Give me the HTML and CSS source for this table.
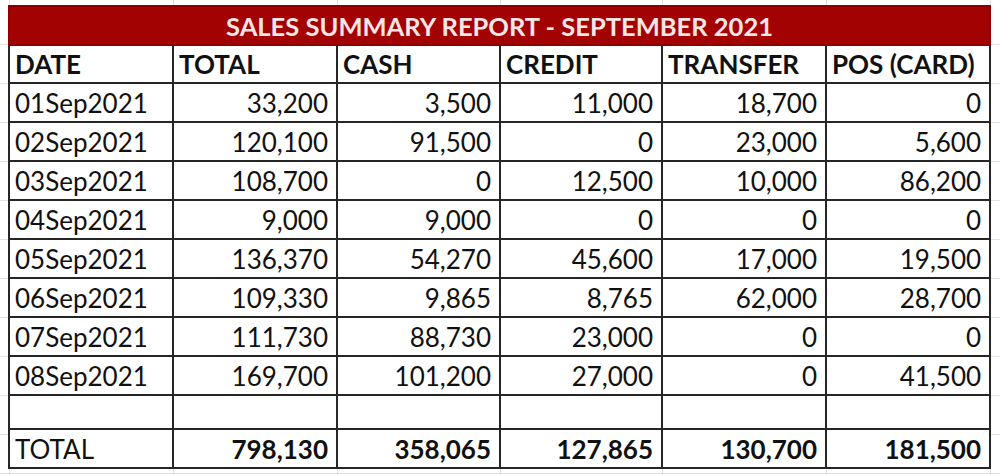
FILE: index.html
```html
<!DOCTYPE html>
<html>
<head>
<meta charset="utf-8">
<link rel="stylesheet" href="styles.css">
</head>
<body>
<div class="sheet">
<table class="report">
  <colgroup>
    <col class="c1"><col class="c2"><col class="c3"><col class="c4"><col class="c5"><col class="c6">
  </colgroup>
  <thead>
    <tr class="banner"><th colspan="6">SALES SUMMARY REPORT - SEPTEMBER 2021</th></tr>
    <tr class="head">
      <th>DATE</th><th>TOTAL</th><th>CASH</th><th>CREDIT</th><th>TRANSFER</th><th>POS (CARD)</th>
    </tr>
  </thead>
  <tbody>
    <tr><td class="d">01Sep2021</td><td>33,200</td><td>3,500</td><td>11,000</td><td>18,700</td><td>0</td></tr>
    <tr><td class="d">02Sep2021</td><td>120,100</td><td>91,500</td><td>0</td><td>23,000</td><td>5,600</td></tr>
    <tr><td class="d">03Sep2021</td><td>108,700</td><td>0</td><td>12,500</td><td>10,000</td><td>86,200</td></tr>
    <tr><td class="d">04Sep2021</td><td>9,000</td><td>9,000</td><td>0</td><td>0</td><td>0</td></tr>
    <tr><td class="d">05Sep2021</td><td>136,370</td><td>54,270</td><td>45,600</td><td>17,000</td><td>19,500</td></tr>
    <tr><td class="d">06Sep2021</td><td>109,330</td><td>9,865</td><td>8,765</td><td>62,000</td><td>28,700</td></tr>
    <tr><td class="d">07Sep2021</td><td>111,730</td><td>88,730</td><td>23,000</td><td>0</td><td>0</td></tr>
    <tr><td class="d">08Sep2021</td><td>169,700</td><td>101,200</td><td>27,000</td><td>0</td><td>41,500</td></tr>
    <tr class="blank"><td></td><td></td><td></td><td></td><td></td><td></td></tr>
    <tr class="total"><td class="d">TOTAL</td><td>798,130</td><td>358,065</td><td>127,865</td><td>130,700</td><td>181,500</td></tr>
  </tbody>
</table>
</div>
</body>
</html>
```

FILE: styles.css
```css
html, body {
  margin: 0;
  padding: 0;
}
body {
  width: 1000px;
  height: 475px;
  overflow: hidden;
  background-color: #ffffff;
  background-image:
    linear-gradient(#e2e2e2, #e2e2e2), linear-gradient(#e2e2e2, #e2e2e2),
    linear-gradient(#e2e2e2, #e2e2e2), linear-gradient(#e2e2e2, #e2e2e2),
    linear-gradient(#e2e2e2, #e2e2e2), linear-gradient(#e2e2e2, #e2e2e2),
    linear-gradient(#e2e2e2, #e2e2e2),
    repeating-linear-gradient(to bottom, transparent 0, transparent 38px, #e2e2e2 38px, #e2e2e2 39px);
  background-size: 1px 100%, 1px 100%, 1px 100%, 1px 100%, 1px 100%, 1px 100%, 1px 100%, 100% 100%;
  background-position: 9px 0, 173px 0, 337px 0, 500px 0, 662px 0, 826px 0, 990px 0, 0 6px;
  background-repeat: no-repeat;
  font-family: Lato, "Open Sans", sans-serif;
  color: #111111;
}
.sheet {
  padding: 5px 0 0 8px;
}
.report {
  border-collapse: collapse;
  table-layout: fixed;
  width: 983px;
  background: #ffffff;
}
.c1 { width: 164px; }
.c2 { width: 164px; }
.c3 { width: 163px; }
.c4 { width: 162px; }
.c5 { width: 164px; }
.c6 { width: 164px; }

.report th,
.report td {
  border: 2px solid #262626;
  padding: 0 8px 0 5px;
  height: 37px;
  white-space: nowrap;
  overflow: hidden;
}
.banner th {
  background: #a20202;
  border: 2px solid #8c0000;
  color: #f7e6e6;
  font-size: 25.5px;
  font-weight: 700;
  text-align: center;
  height: 37px;
  padding: 0;
}
.head th {
  font-size: 26px;
  font-weight: 700;
  text-align: left;
  height: 36px;
}
.report td {
  font-size: 26px;
  text-align: right;
}
.report td.d {
  text-align: left;
}
.blank td {
  height: 32px;
}
.total td {
  font-weight: 700;
}
.total td.d {
  font-weight: 400;
}
```
